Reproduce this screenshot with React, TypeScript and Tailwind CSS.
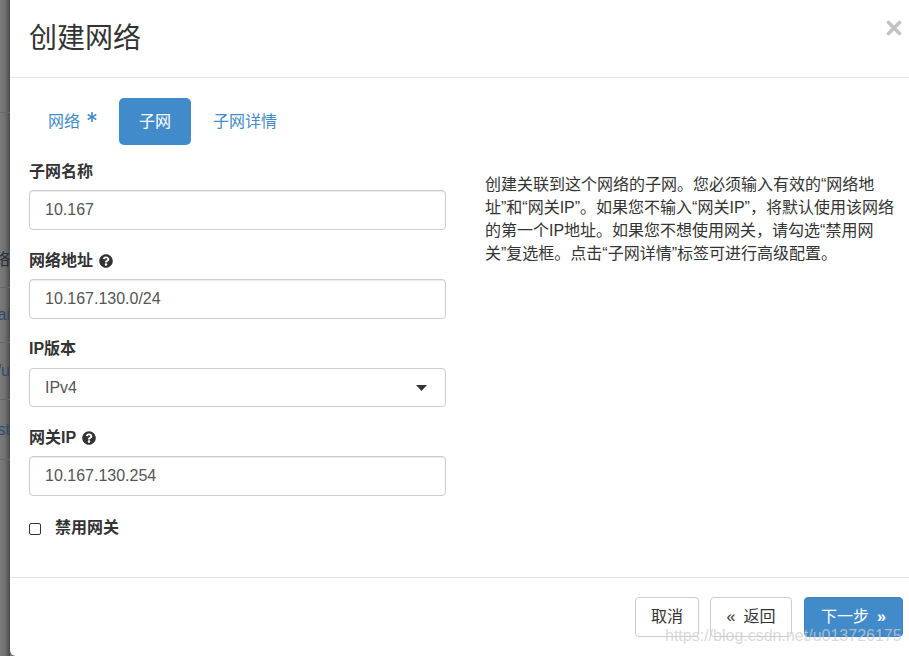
import React from "react";
import { FaAsterisk, FaQuestionCircle } from "react-icons/fa";

const FONT = { fontFamily: '"Liberation Sans", "Noto Sans CJK SC", sans-serif' };

function Label({ text, help }: { text: string; help?: boolean }) {
  return (
    <div className="flex items-center gap-[6px] text-[16px] font-bold leading-[22px] text-[#333]">
      <span>{text}</span>
      {help && <FaQuestionCircle size={14} color="#333" />}
    </div>
  );
}

function Input({ value }: { value: string }) {
  return (
    <div className="flex h-[40px] items-center rounded-[4px] border border-[#ccc] px-[15px] text-[16px] text-[#555] shadow-[inset_0_1px_1px_rgba(0,0,0,0.075)]">
      {value}
    </div>
  );
}

export default function App() {
  return (
    <div className="relative flex h-[656px] w-[909px] overflow-hidden bg-[#747474]" style={FONT}>
      {/* background strip */}
      <div className="flex w-[10px] shrink-0 flex-col overflow-hidden bg-linear-to-r from-[#7a7a7a] via-[#717171] to-[#4a4a4a] text-[16px]">
        <div className="h-[113px] shrink-0 border-b border-[#666]" />
        <div className="flex h-[175px] shrink-0 items-end justify-end whitespace-nowrap border-b border-[#666] pb-[15px] text-[#22303f]">网络</div>
        <div className="flex h-[55px] shrink-0 items-center justify-end whitespace-nowrap border-b border-[#666] text-[#2e4a6a]">bai</div>
        <div className="flex h-[57px] shrink-0 items-center justify-end whitespace-nowrap border-b border-[#666] text-[#2e4a6a]">d/u</div>
        <div className="flex h-[60px] shrink-0 items-center justify-end whitespace-nowrap border-b border-[#666] text-[#2e4a6a]">est</div>
      </div>

      {/* modal */}
      <div className="flex min-w-0 flex-1 flex-col overflow-hidden rounded-bl-[6px] bg-white">
        <div className="flex h-[78px] shrink-0 items-center justify-between border-b border-[#e5e5e5] pl-[19px] pr-[7px]">
          <div className="text-[28px] leading-none text-[#333]">创建网络</div>
          <svg width="16" height="16" viewBox="0 0 16 16" className="mb-[22px]">
            <path d="M2.5 2.5 L13.5 13.5 M13.5 2.5 L2.5 13.5" stroke="#c3c3c3" strokeWidth="3.6" strokeLinecap="round" />
          </svg>
        </div>

        <div className="flex min-w-0 flex-1 flex-col pl-[19px] pt-[19px]">
          <div className="flex h-[48px] items-stretch gap-[2px] pt-[1px] text-[16px]">
            <div className="flex items-center pl-[19px] pr-[20px] text-[#428bca]">
              <span>网络</span>
              <span className="relative -top-[5px] ml-[7px]"><FaAsterisk size={10} color="#428bca" /></span>
            </div>
            <div className="flex items-center rounded-[5px] bg-[#428bca] px-[20px] text-white">子网</div>
            <div className="flex items-center px-[20px] text-[#428bca]">子网详情</div>
          </div>

          <div className="mt-[16px] flex">
            <div className="flex w-[417px] shrink-0 flex-col">
              <Label text="子网名称" />
              <div className="mt-[7px]"><Input value="10.167" /></div>

              <div className="mt-[20px]"><Label text="网络地址" help /></div>
              <div className="mt-[7px]"><Input value="10.167.130.0/24" /></div>

              <div className="mt-[19px]"><Label text="IP版本" /></div>
              <div className="mt-[8px] flex h-[39px] items-center justify-between rounded-[4px] border border-[#ccc] pl-[15px] pr-[18px] text-[16px] text-[#555]">
                <span>IPv4</span>
                <svg width="11" height="6" viewBox="0 0 11 6"><path d="M0 0 H11 L5.5 6 Z" fill="#333" /></svg>
              </div>

              <div className="mt-[20px]"><Label text="网关IP" help /></div>
              <div className="mt-[7px]"><Input value="10.167.130.254" /></div>

              <div className="mt-[21px] flex h-[22px] items-center">
                <div className="mt-[2px] h-[12px] w-[12px] rounded-[2px] border border-[#333]" />
                <span className="ml-[14px] text-[16px] font-bold text-[#333]">禁用网关</span>
              </div>
            </div>

            <div className="ml-[39px] min-w-0 pt-[12px] text-[16px] leading-[23px] text-[#333]">
              <div className="whitespace-nowrap">创建关联到这个网络的子网。您必须输入有效的“网络地</div>
              <div className="whitespace-nowrap">址”和“网关IP”。如果您不输入“网关IP”，将默认使用该网络</div>
              <div className="whitespace-nowrap">的第一个IP地址。如果您不想使用网关，请勾选“禁用网</div>
              <div className="whitespace-nowrap">关”复选框。点击“子网详情”标签可进行高级配置。</div>
            </div>
          </div>
        </div>

        <div className="flex h-[79px] shrink-0 justify-end gap-[11px] border-t border-[#e5e5e5] pr-[6px] pt-[19px]">
          <div className="flex h-[40px] w-[64px] items-center justify-center rounded-[4px] border border-[#ccc] bg-white text-[16px] text-[#333]">取消</div>
          <div className="flex h-[40px] w-[82px] items-center justify-center gap-[8px] rounded-[4px] border border-[#ccc] bg-white text-[16px] text-[#333]">
            <span>«</span><span>返回</span>
          </div>
          <div className="ml-[1px] flex h-[40px] w-[99px] items-center justify-center gap-[8px] rounded-[4px] border border-[#3f83bf] bg-[#428bca] text-[16px] text-white">
            <span>下一步</span><span className="font-bold">»</span>
          </div>
        </div>
      </div>

      <div className="pointer-events-none absolute left-[665px] top-[624px] whitespace-nowrap text-[16px] text-[rgba(205,205,205,0.75)]">
        https://blog.csdn.net/u013726175
      </div>
    </div>
  );
}
